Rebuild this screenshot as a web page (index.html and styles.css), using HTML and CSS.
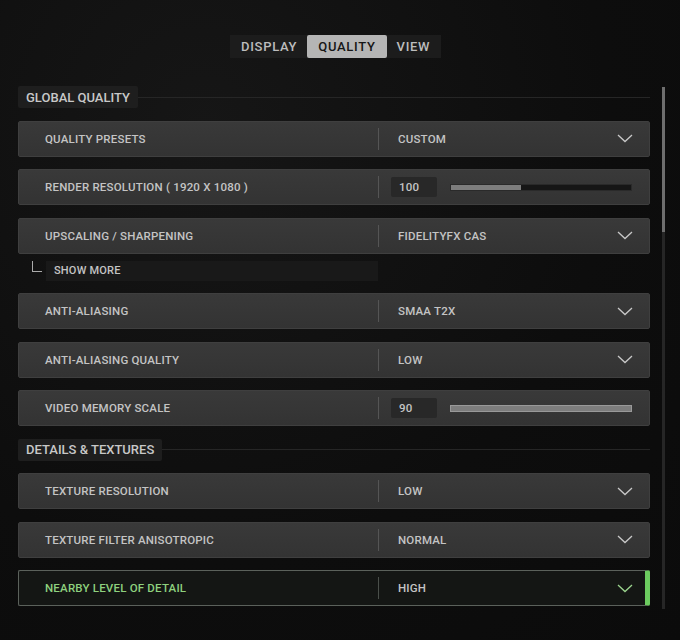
FILE: index.html
```html
<!DOCTYPE html>
<html>
<head>
    <title>Graphics Settings</title>
    <meta name="viewport" content="width=device-width, initial-scale=1">
    <link rel="stylesheet" href="styles.css">
</head>
<body>
    <div class="tabs">
        <div class="tab">DISPLAY</div>
        <div class="tab active">QUALITY</div>
        <div class="tab">VIEW</div>
    </div>

    <div class="page">
        <div class="list">
            <div class="section">
                <div class="section-title">GLOBAL QUALITY</div>
                <div class="section-line"></div>
            </div>

            <div class="row">
                <div class="label">QUALITY PRESETS</div>
                <div class="value">CUSTOM</div>
                <svg class="chevron" viewBox="0 0 16 9"><path d="M1 1 L8 7.5 L15 1" /></svg>
            </div>

            <div class="row">
                <div class="label">RENDER RESOLUTION ( 1920 X 1080 )</div>
                <div class="slider">
                    <div class="num">100</div>
                    <div class="bar"><div class="fill" style="width: 39%"></div></div>
                </div>
            </div>

            <div class="row">
                <div class="label">UPSCALING / SHARPENING</div>
                <div class="value">FIDELITYFX CAS</div>
                <svg class="chevron" viewBox="0 0 16 9"><path d="M1 1 L8 7.5 L15 1" /></svg>
            </div>

            <div class="more">
                <span class="corner"></span>
                <div class="more-box">SHOW MORE</div>
            </div>

            <div class="row">
                <div class="label">ANTI-ALIASING</div>
                <div class="value">SMAA T2X</div>
                <svg class="chevron" viewBox="0 0 16 9"><path d="M1 1 L8 7.5 L15 1" /></svg>
            </div>

            <div class="row">
                <div class="label">ANTI-ALIASING QUALITY</div>
                <div class="value">LOW</div>
                <svg class="chevron" viewBox="0 0 16 9"><path d="M1 1 L8 7.5 L15 1" /></svg>
            </div>

            <div class="row">
                <div class="label">VIDEO MEMORY SCALE</div>
                <div class="slider">
                    <div class="num">90</div>
                    <div class="bar full"><div class="fill" style="width: 100%"></div></div>
                </div>
            </div>

            <div class="section">
                <div class="section-title">DETAILS &amp; TEXTURES</div>
                <div class="section-line"></div>
            </div>

            <div class="row">
                <div class="label">TEXTURE RESOLUTION</div>
                <div class="value">LOW</div>
                <svg class="chevron" viewBox="0 0 16 9"><path d="M1 1 L8 7.5 L15 1" /></svg>
            </div>

            <div class="row">
                <div class="label">TEXTURE FILTER ANISOTROPIC</div>
                <div class="value">NORMAL</div>
                <svg class="chevron" viewBox="0 0 16 9"><path d="M1 1 L8 7.5 L15 1" /></svg>
            </div>

            <div class="row selected">
                <div class="label">NEARBY LEVEL OF DETAIL</div>
                <div class="value">HIGH</div>
                <svg class="chevron" viewBox="0 0 16 9"><path d="M1 1 L8 7.5 L15 1" /></svg>
            </div>
        </div>

        <div class="scrollbar">
            <div class="thumb"></div>
        </div>
    </div>
</body>
</html>
```

FILE: styles.css
```css
body {
    margin: 0;
    padding: 0;
    height: 640px;
    overflow: hidden;
    font-family: Roboto, "DejaVu Sans", sans-serif;
    font-weight: 500;
    color: #c4c4c4;
    background: radial-gradient(ellipse at 30% 20%, #161616 0%, #0d0d0d 60%, #0b0b0b 100%);
}
.tabs {
    display: flex;
    width: max-content;
    margin: 35px 0 0 230px;
    padding: 0 1px;
    background-color: #1c1c1c;
    height: 23px;
}
.tab {
    display: flex;
    align-items: center;
    padding: 0 10px;
    font-size: 13px;
    letter-spacing: 0.7px;
    color: #bdbdbd;
}
.tab.active {
    background-color: #b5b5b5;
    color: #161616;
    border-radius: 2px;
    padding: 0 11px;
}
.page {
    display: flex;
    padding: 28px 0 0 18px;
}
.list {
    width: 632px;
    display: flex;
    flex-direction: column;
    gap: 12.5px;
}
.section {
    display: flex;
    align-items: center;
    height: 22px;
}
.section-title {
    height: 22px;
    display: flex;
    align-items: center;
    padding: 0 8px;
    background-color: #1e1e1e;
    border-radius: 2px;
    font-size: 13px;
    color: #c8c8c8;
}
.section-line {
    flex: 1;
    height: 1px;
    background-color: #262626;
}
.row {
    display: flex;
    align-items: center;
    height: 36px;
    box-sizing: border-box;
    background: linear-gradient(#393939, #333333);
    border: 1px solid #3f3f3f;
    border-radius: 2px;
    font-size: 11.5px;
    letter-spacing: 0.2px;
}
.label {
    width: 333px;
    padding-left: 26px;
    height: 22px;
    display: flex;
    align-items: center;
    border-right: 1px solid #555;
    flex-shrink: 0;
}
.value {
    flex: 1;
    padding-left: 19px;
}
.chevron {
    width: 16px;
    height: 9px;
    margin-right: 16px;
    fill: none;
    stroke: #c8c8c8;
    stroke-width: 1.3;
}
.slider {
    flex: 1;
    display: flex;
    align-items: center;
    padding-left: 12px;
    padding-right: 17px;
}
.num {
    width: 38px;
    height: 20px;
    padding-left: 8px;
    display: flex;
    align-items: center;
    background-color: #282828;
    border-radius: 2px;
}
.bar {
    flex: 1;
    height: 5px;
    margin-left: 13px;
    background-color: #161616;
    border: 1px solid #2a2a2a;
}
.bar.full {
    border-color: #999;
}
.fill {
    height: 100%;
    background-color: #7d7d7d;
}
.more {
    display: flex;
    align-items: center;
    height: 20px;
    margin-top: -5.5px;
}
.corner {
    width: 9px;
    height: 10px;
    margin: 0 4px 8px 14px;
    border-left: 1px solid #aaa;
    border-bottom: 1px solid #aaa;
}
.more-box {
    width: 324px;
    height: 20px;
    padding-left: 8px;
    display: flex;
    align-items: center;
    background-color: #191919;
    font-size: 11px;
    letter-spacing: 0.2px;
    color: #c4c4c4;
}
.row.selected {
    background: #141614;
    border-color: #5b615b;
    border-right: 5px solid #6ccb5f;
    color: #8ed17e;
}
.row.selected .label {
    border-right-color: #4a4f4a;
}
.row.selected .value {
    color: #c4c4c4;
}
.row.selected .chevron {
    stroke: #9bd48e;
    margin-right: 12px;
}
.scrollbar {
    width: 3px;
    height: 522px;
    margin-left: 12px;
    margin-top: 1px;
    background-color: #262626;
}
.thumb {
    height: 145px;
    background-color: #6e6e6e;
}
```
